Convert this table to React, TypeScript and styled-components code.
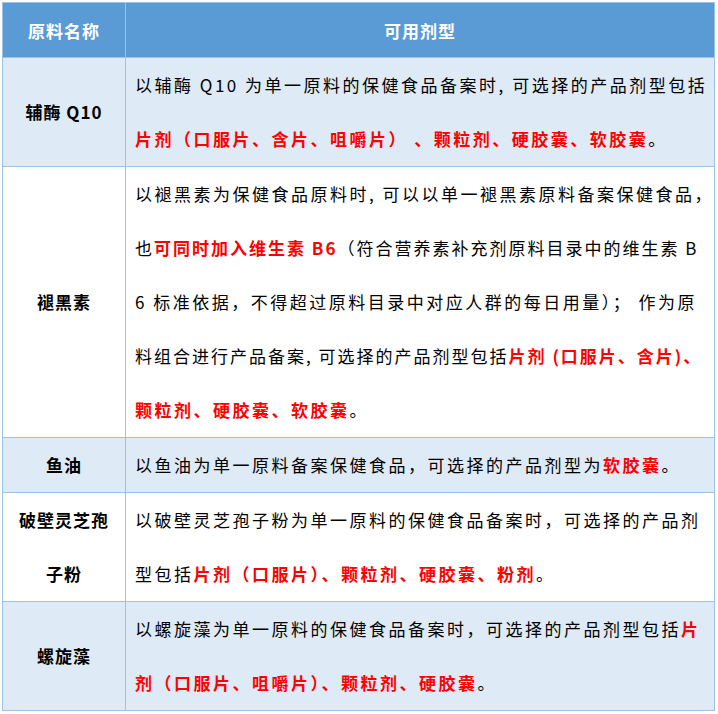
import React from 'react';
import styled, { createGlobalStyle } from 'styled-components';

const GlobalStyle = createGlobalStyle`
  html, body {
    margin: 0;
    padding: 0;
    background: #ffffff;
  }
  body {
    font-family: "Noto Sans CJK SC", "Noto Sans", sans-serif;
  }
`;

const Page = styled.div`
  padding: 2px 3px 2px 2px;
`;

const Table = styled.table`
  width: 713px;
  border-collapse: collapse;
  table-layout: fixed;
  border: 1px solid #9cc2e5;
`;

const NameCol = styled.col`
  width: 123px;
`;

const HeadCell = styled.th`
  height: 54px;
  padding: 0;
  background: #5b9bd5;
  color: #ffffff;
  font-size: 17px;
  font-weight: 700;
  letter-spacing: 1px;
  text-align: center;
  border: 1px solid #9cc2e5;
  border-top: none;
`;

const Row = styled.tr<{ $shaded: boolean }>`
  background: ${(p) => (p.$shaded ? '#deeaf6' : '#ffffff')};
`;

const NameCell = styled.td`
  padding: 0 4px;
  border: 1px solid #9cc2e5;
  text-align: center;
  font-size: 17px;
  font-weight: 700;
  line-height: 54px;
  color: #000000;
  letter-spacing: 1px;
`;

const TextCell = styled.td`
  padding: 0 0 0 9px;
  border: 1px solid #9cc2e5;
  font-size: 17px;
  line-height: 54px;
  color: #000000;
  white-space: nowrap;
  overflow: hidden;
`;

const Line = styled.div<{ $tight?: boolean }>`
  letter-spacing: ${(p) => (p.$tight ? '2px' : '2.5px')};
`;

const Red = styled.span`
  color: #ff0000;
  font-weight: 700;
`;

type LineData = { text: React.ReactNode; tight?: boolean };

type RowData = {
  name: React.ReactNode;
  lines: LineData[];
  shaded: boolean;
};

const rows: RowData[] = [
  {
    name: '辅酶 Q10',
    shaded: true,
    lines: [
      { text: <>以辅酶 Q10 为单一原料的保健食品备案时, 可选择的产品剂型包括</> },
      { text: <><Red>片剂（口服片、含片、咀嚼片） 、颗粒剂、硬胶囊、软胶囊</Red>。</> },
    ],
  },
  {
    name: '褪黑素',
    shaded: false,
    lines: [
      { text: <>以褪黑素为保健食品原料时, 可以以单一褪黑素原料备案保健食品，</> },
      {
        text: <>也<Red>可同时加入维生素 B6</Red>（符合营养素补充剂原料目录中的维生素 B</>,
        tight: true,
      },
      { text: <>6 标准依据，不得超过原料目录中对应人群的每日用量）； 作为原</> },
      {
        text: <>料组合进行产品备案, 可选择的产品剂型包括<Red>片剂 (口服片、含片)、</Red></>,
        tight: true,
      },
      { text: <><Red>颗粒剂、硬胶囊、软胶囊</Red>。</> },
    ],
  },
  {
    name: '鱼油',
    shaded: true,
    lines: [{ text: <>以鱼油为单一原料备案保健食品，可选择的产品剂型为<Red>软胶囊</Red>。</> }],
  },
  {
    name: (
      <>
        破壁灵芝孢
        <br />
        子粉
      </>
    ),
    shaded: false,
    lines: [
      { text: <>以破壁灵芝孢子粉为单一原料的保健食品备案时，可选择的产品剂</> },
      { text: <>型包括<Red>片剂（口服片）、颗粒剂、硬胶囊、粉剂</Red>。</> },
    ],
  },
  {
    name: '螺旋藻',
    shaded: true,
    lines: [
      { text: <>以螺旋藻为单一原料的保健食品备案时，可选择的产品剂型包括<Red>片</Red></> },
      { text: <><Red>剂（口服片、咀嚼片）、颗粒剂、硬胶囊</Red>。</> },
    ],
  },
];

export default function App() {
  return (
    <Page>
      <GlobalStyle />
      <Table>
        <colgroup>
          <NameCol />
          <col />
        </colgroup>
        <thead>
          <tr>
            <HeadCell>原料名称</HeadCell>
            <HeadCell>可用剂型</HeadCell>
          </tr>
        </thead>
        <tbody>
          {rows.map((row, i) => (
            <Row key={i} $shaded={row.shaded}>
              <NameCell>{row.name}</NameCell>
              <TextCell>
                {row.lines.map((line, j) => (
                  <Line key={j} $tight={line.tight}>
                    {line.text}
                  </Line>
                ))}
              </TextCell>
            </Row>
          ))}
        </tbody>
      </Table>
    </Page>
  );
}
